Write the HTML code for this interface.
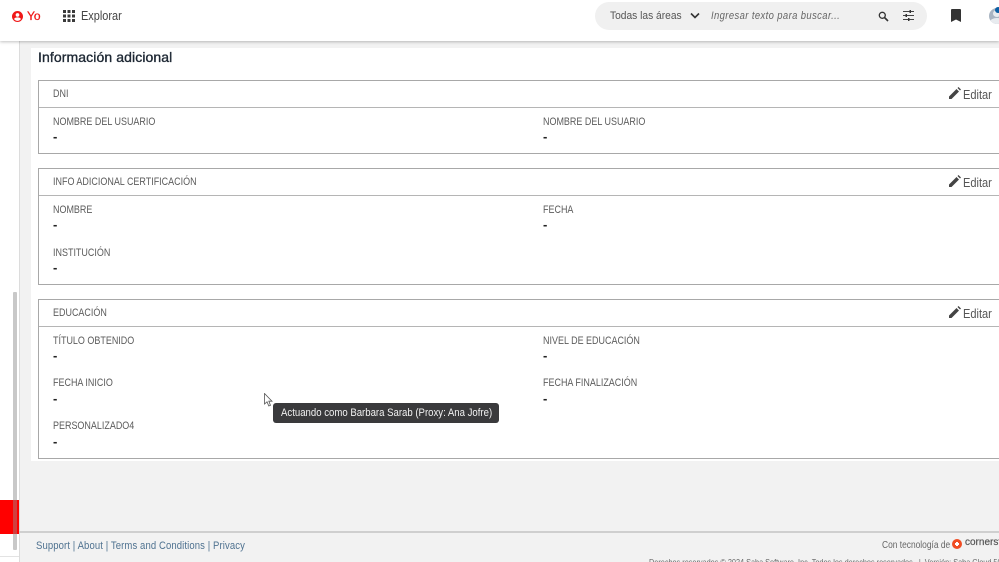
<!DOCTYPE html>
<html lang="es">
<head>
<meta charset="utf-8">
<style>
html,body{margin:0;padding:0;width:999px;height:562px;overflow:hidden;background:#fff;font-family:"Liberation Sans",sans-serif}
#root{position:absolute;left:0;top:0;width:999px;height:562px;overflow:hidden}
.a{position:absolute;white-space:nowrap}
.s{transform-origin:0 0}
#main{left:20px;top:41px;width:979px;height:521px;background:#f2f2f2}
#card{left:31px;top:48px;width:968px;height:413px;background:#fff}
.box{position:absolute;left:38px;width:961px;border:1px solid #a8a8a8;border-right:none;box-sizing:border-box;background:#fff}
.hr{position:absolute;left:0;right:0;top:26px;height:1px;background:#b5b5b5}
.t{color:#5c5c5c;font-size:11.2px;line-height:12px;transform:scaleX(.802);transform-origin:0 0}
.d{color:#222;font-size:13px;font-weight:bold;line-height:12px}
.ed{color:#555;font-size:13px;line-height:14px;transform:scaleX(.85);transform-origin:0 0}
</style>
</head>
<body>
<div id="root">
<div class="a" style="left:0;top:0;width:999px;height:41px;background:#fff;box-shadow:0 1px 3px rgba(0,0,0,.25);z-index:5"></div>
<div class="a" style="left:19px;top:41px;width:1px;height:521px;background:#dcdcdc"></div>
<div class="a" id="main"></div>
<div class="a" id="card"></div>

<div style="position:absolute;left:0;top:0;width:999px;height:41px;z-index:6;overflow:hidden">
<svg class="a" style="left:12px;top:11px" width="11" height="11" viewBox="0 0 24 24"><path fill="#f01818" d="M12 0a12 12 0 1 0 0 24a12 12 0 0 0 0-24zm0 4.500a4 4 0 1 1 0 8a4 4 0 0 1 0-8zm0 17c-3 0-5.700-1.500-7.300-3.800c.1-2.400 4.900-3.700 7.300-3.700s7.200 1.300 7.300 3.700c-1.600 2.300-4.300 3.800-7.300 3.800z"/></svg>
<div class="a s" style="left:27px;top:9px;font-size:12px;line-height:14px;color:#f01818;-webkit-text-stroke:.25px #f01818">Yo</div>
<svg class="a" style="left:63px;top:10px" width="12" height="12" viewBox="0 0 12 12" fill="#3a3a3a"><rect x="0" y="0" width="3" height="3"/><rect x="4.500" y="0" width="3" height="3"/><rect x="9" y="0" width="3" height="3"/><rect x="0" y="4.500" width="3" height="3"/><rect x="4.500" y="4.500" width="3" height="3"/><rect x="9" y="4.500" width="3" height="3"/><rect x="0" y="9" width="3" height="3"/><rect x="4.500" y="9" width="3" height="3"/><rect x="9" y="9" width="3" height="3"/></svg>
<div class="a s" style="left:81px;top:9px;font-size:12.500px;line-height:14px;color:#444;transform:scaleX(.875)">Explorar</div>
<div class="a" style="left:595px;top:2px;width:332px;height:28px;border-radius:14px;background:#f0f0f0"></div>
<div class="a s" style="left:610px;top:9px;font-size:11px;line-height:14px;color:#555;transform:scaleX(.93)">Todas las áreas</div>
<svg class="a" style="left:690px;top:12px" width="10" height="8" viewBox="0 0 10 8"><path d="M1 1.500L5 5.500L9 1.500" fill="none" stroke="#333" stroke-width="1.600"/></svg>
<div class="a s" style="left:711px;top:9px;font-size:11px;line-height:14px;color:#666;font-style:italic;letter-spacing:.45px;transform:scaleX(.86)">Ingresar texto para buscar...</div>
<svg class="a" style="left:878px;top:11px" width="11" height="11" viewBox="0 0 11 11"><circle cx="4.300" cy="4.300" r="3" fill="none" stroke="#333" stroke-width="1.300"/><path d="M6.500 6.500L10 10" stroke="#333" stroke-width="1.600"/></svg>
<svg class="a" style="left:903px;top:10px" width="11" height="11" viewBox="0 0 11 11"><path d="M0 1.500H11M0 5.500H11M0 9.500H11" stroke="#444" stroke-width="1"/><rect x="6.500" y="0" width="1.500" height="3" fill="#333"/><rect x="2.500" y="4" width="1.500" height="3" fill="#333"/><rect x="5" y="8" width="1.500" height="3" fill="#333"/></svg>
<svg class="a" style="left:951px;top:9px" width="10" height="13" viewBox="0 0 10 13"><path d="M1 0H9A1 1 0 0 1 10 1V13L5 10.500L0 13V1A1 1 0 0 1 1 0Z" fill="#333"/></svg>
<div class="a" style="left:989px;top:8px;width:16px;height:16px;border-radius:50%;background:#a9b4c2;overflow:hidden"><div class="a" style="left:4px;top:2px;width:8px;height:7px;border-radius:50%;background:#e8ebef"></div><div class="a" style="left:1px;top:10px;width:14px;height:8px;border-radius:50%;background:#e8ebef"></div></div>
<div class="a" style="left:995px;top:7px;width:6px;height:6px;border-radius:50%;background:#0b5fa5"></div>
</div>

<div class="a" style="left:38px;top:48px;font-size:14px;line-height:18px;color:#1d2733;letter-spacing:.1px;-webkit-text-stroke:.35px #1d2733">Información adicional</div>

<div class="box" style="top:80px;height:74px"><div class="hr"></div></div>
<div class="box" style="top:168px;height:117px"><div class="hr"></div></div>
<div class="box" style="top:299px;height:160px"><div class="hr"></div></div>

<div class="a t" style="left:52.500px;top:88px">DNI</div>
<div class="a t" style="left:52.500px;top:115.500px">NOMBRE DEL USUARIO</div>
<div class="a d" style="left:53px;top:131px">-</div>
<div class="a t" style="left:543px;top:115.500px">NOMBRE DEL USUARIO</div>
<div class="a d" style="left:543px;top:131px">-</div>

<div class="a t" style="left:52.500px;top:176px">INFO ADICIONAL CERTIFICACIÓN</div>
<div class="a t" style="left:52.500px;top:203.500px">NOMBRE</div>
<div class="a d" style="left:53px;top:219px">-</div>
<div class="a t" style="left:543px;top:203.500px">FECHA</div>
<div class="a d" style="left:543px;top:219px">-</div>
<div class="a t" style="left:52.500px;top:246.500px">INSTITUCIÓN</div>
<div class="a d" style="left:53px;top:262px">-</div>

<div class="a t" style="left:52.500px;top:307px">EDUCACIÓN</div>
<div class="a t" style="left:52.500px;top:334.500px">TÍTULO OBTENIDO</div>
<div class="a d" style="left:53px;top:350px">-</div>
<div class="a t" style="left:543px;top:334.500px">NIVEL DE EDUCACIÓN</div>
<div class="a d" style="left:543px;top:350px">-</div>
<div class="a t" style="left:52.500px;top:377px">FECHA INICIO</div>
<div class="a d" style="left:53px;top:393px">-</div>
<div class="a t" style="left:543px;top:377px">FECHA FINALIZACIÓN</div>
<div class="a d" style="left:543px;top:393px">-</div>
<div class="a t" style="left:52.500px;top:420px">PERSONALIZADO4</div>
<div class="a d" style="left:53px;top:436px">-</div>

<svg class="a" style="left:949px;top:87px" width="12" height="12" viewBox="0 0 12 12"><path d="M0 12V9.500L7.500 2L10 4.500L2.500 12ZM8.500 1L9.500 0L12 2.500L11 3.500Z" fill="#444"/></svg>
<div class="a ed" style="left:963px;top:88px">Editar</div>
<svg class="a" style="left:949px;top:175px" width="12" height="12" viewBox="0 0 12 12"><path d="M0 12V9.500L7.500 2L10 4.500L2.500 12ZM8.500 1L9.500 0L12 2.500L11 3.500Z" fill="#444"/></svg>
<div class="a ed" style="left:963px;top:176px">Editar</div>
<svg class="a" style="left:949px;top:306px" width="12" height="12" viewBox="0 0 12 12"><path d="M0 12V9.500L7.500 2L10 4.500L2.500 12ZM8.500 1L9.500 0L12 2.500L11 3.500Z" fill="#444"/></svg>
<div class="a ed" style="left:963px;top:307px">Editar</div>

<svg class="a" style="left:264px;top:393px" width="9" height="14" viewBox="0 0 9 14"><path d="M.5.500V11L3 8.800L4.800 13L6.500 12.300L4.800 8.200H8Z" fill="#fff" stroke="#555" stroke-width=".8"/></svg>
<div class="a" style="left:273px;top:403px;width:226px;height:20px;border-radius:3px;background:#3a3a3c"></div>
<div class="a s" style="left:281px;top:407px;font-size:11px;line-height:12px;color:#f2f2f2;transform:scaleX(.872)">Actuando como Barbara Sarab (Proxy: Ana Jofre)</div>

<div class="a" style="left:13px;top:292px;width:4px;height:258px;background:#c8c8c8;border-radius:1px;z-index:3"></div>
<div class="a" style="left:0;top:500px;width:19px;height:34px;background:#ff0000"></div>
<div class="a" style="left:13px;top:500px;width:4px;height:34px;background:#d0403f;z-index:4"></div>
<div class="a" style="left:0;top:556px;width:19px;height:1px;background:#e3e3e3"></div>

<div class="a" style="left:19px;top:531px;width:980px;height:2px;background:#cfcfcf"></div>
<div class="a s" style="left:36px;top:539.500px;font-size:11px;line-height:12px;color:#4f7290;letter-spacing:.12px;transform:scaleX(.865)">Support | About | Terms and Conditions | Privacy</div>
<div class="a s" style="left:882px;top:539.500px;font-size:10px;line-height:12px;color:#666;transform:scaleX(.84)">Con tecnología de</div>
<div class="a" style="left:952px;top:539px;width:10px;height:10px;border-radius:50%;background:#f04c23"></div>
<div class="a" style="left:955px;top:543px;width:4px;height:2px;background:#fff"></div>
<div class="a" style="left:956px;top:542px;width:2px;height:4px;background:#fff"></div>
<div class="a" style="left:965px;top:537px;width:34px;overflow:hidden;font-size:10px;line-height:12px;color:#555;-webkit-text-stroke:.2px #555">cornerstone</div>
<div class="a" style="left:649px;top:557px;width:350px;height:5px;overflow:hidden"><div class="a s" style="left:0;top:0;font-size:8.300px;line-height:10px;color:#666;transform:scaleX(.88)">Derechos reservados © 2024 Saba Software, Inc. Todos los derechos reservados. &nbsp;|&nbsp; Versión: Saba Cloud 50</div></div>
</div>
</body>
</html>
